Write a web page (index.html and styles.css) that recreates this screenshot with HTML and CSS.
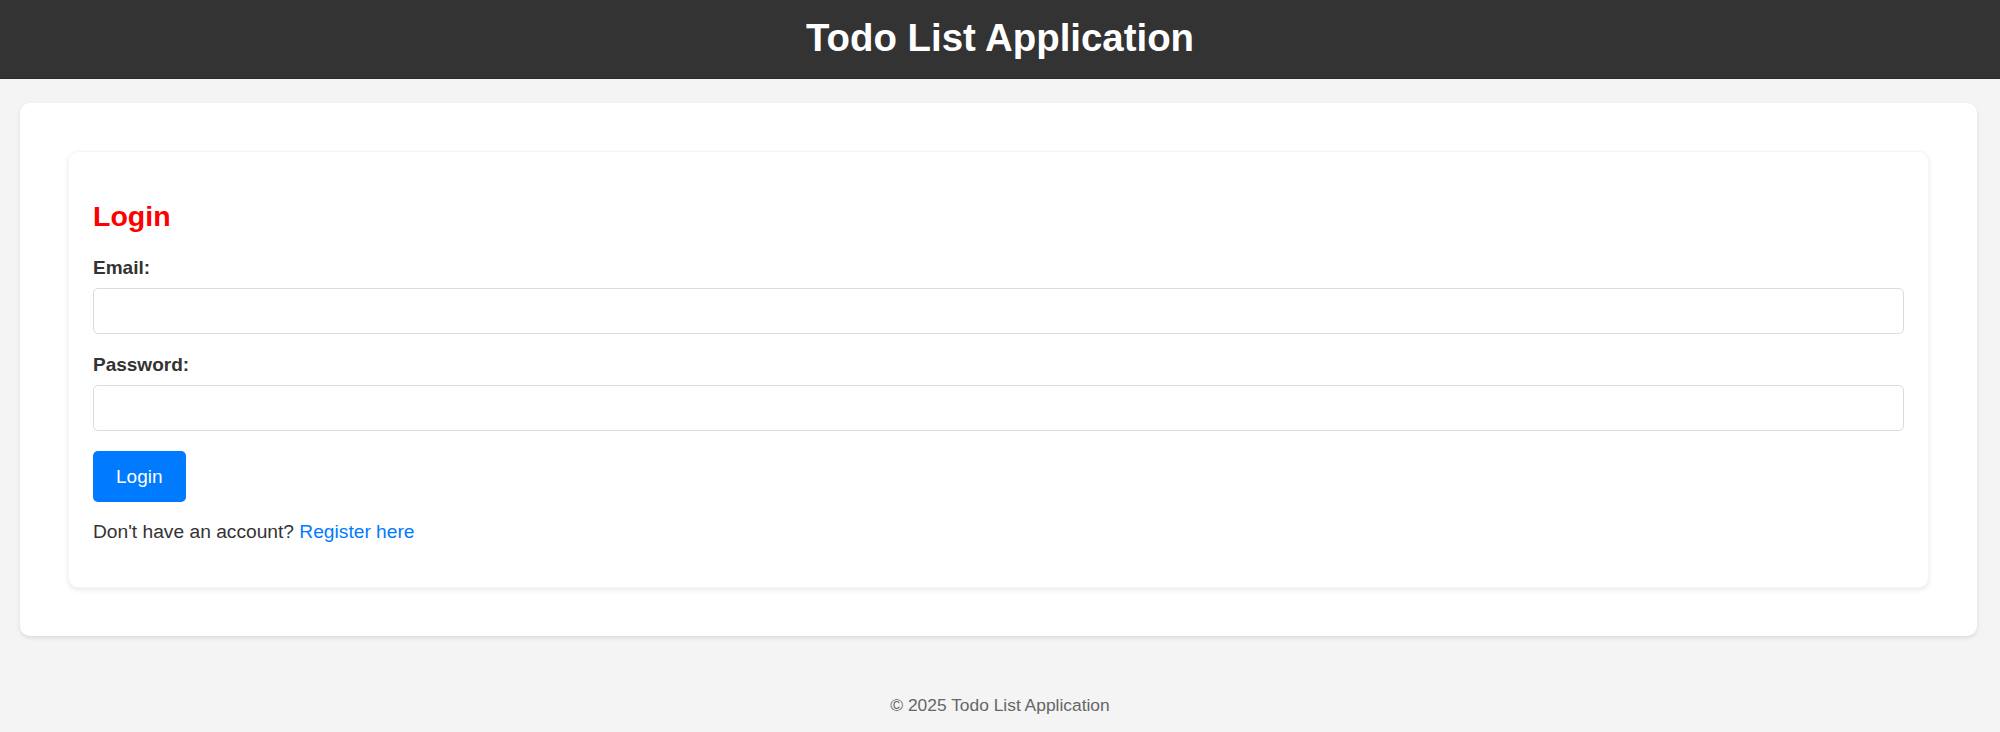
FILE: index.html
```html
<!DOCTYPE html>
<html lang="en">
<head>
<meta charset="utf-8">
<title>Todo List Application</title>
<link rel="stylesheet" href="styles.css">
</head>
<body>
<header class="site-header">
  <h1 class="site-title">Todo List Application</h1>
</header>
<main class="container">
  <section class="auth-card">
    <h2 class="auth-title">Login</h2>
    <form class="auth-form">
      <div class="form-group">
        <label class="form-label" for="email">Email:</label>
        <input class="form-input" type="email" id="email">
      </div>
      <div class="form-group">
        <label class="form-label" for="password">Password:</label>
        <input class="form-input" type="password" id="password">
      </div>
      <button class="btn-primary" type="button">Login</button>
    </form>
    <p class="auth-note">Don't have an account? <a class="auth-link" href="#">Register here</a></p>
  </section>
</main>
<footer class="site-footer">© 2025 Todo List Application</footer>
</body>
</html>
```

FILE: styles.css
```css
* { box-sizing: border-box; }

html, body {
  margin: 0;
  padding: 0;
  background: #f4f4f4;
  font-family: "Liberation Sans", Arial, Helvetica, sans-serif;
  color: #333;
  overflow: hidden;
}

.site-header {
  background: #333;
  color: #fff;
  padding: 16px 0 19px;
  text-align: center;
  border-bottom: 1px solid #2a2a2a;
}

.site-title {
  margin: 0;
  font-size: 38.4px;
  line-height: 43px;
  font-weight: bold;
}

.container {
  margin: 24px 23px 0 20px;
  background: #fff;
  border-radius: 10px;
  padding: 48px;
  box-shadow: 0 2px 4px rgba(0, 0, 0, 0.1);
}

.auth-card {
  background: #fff;
  border: 1px solid #f6f6f6;
  border-radius: 10px;
  padding: 24px;
  box-shadow: 0 2px 5px rgba(0, 0, 0, 0.09);
}

.auth-title {
  margin: 24px 0 25px;
  color: #ff0000;
  font-size: 28.5px;
  line-height: 32px;
  font-weight: bold;
}

.form-group {
  margin-bottom: 20px;
}

.form-label {
  display: block;
  font-size: 19px;
  line-height: 21px;
  font-weight: bold;
  color: #333;
  margin-bottom: 10px;
}

.form-input {
  display: block;
  width: 100%;
  height: 46px;
  border: 1px solid #dcdcdc;
  border-radius: 5px;
  background: #fff;
  font-family: inherit;
  font-size: 18px;
  padding: 0 12px;
}

.btn-primary {
  display: block;
  background: #007bff;
  color: #fff;
  border: none;
  border-radius: 5px;
  font-family: inherit;
  font-size: 19px;
  line-height: 21px;
  padding: 15px 23px;
  cursor: pointer;
}

.auth-note {
  margin: 19px 0 20px;
  font-size: 19.2px;
  line-height: 22px;
  color: #333;
}

.auth-link {
  color: #007bff;
  text-decoration: none;
}

.site-footer {
  text-align: center;
  color: #666;
  font-size: 17.4px;
  line-height: 20px;
  padding: 59px 0 10px;
}
```
